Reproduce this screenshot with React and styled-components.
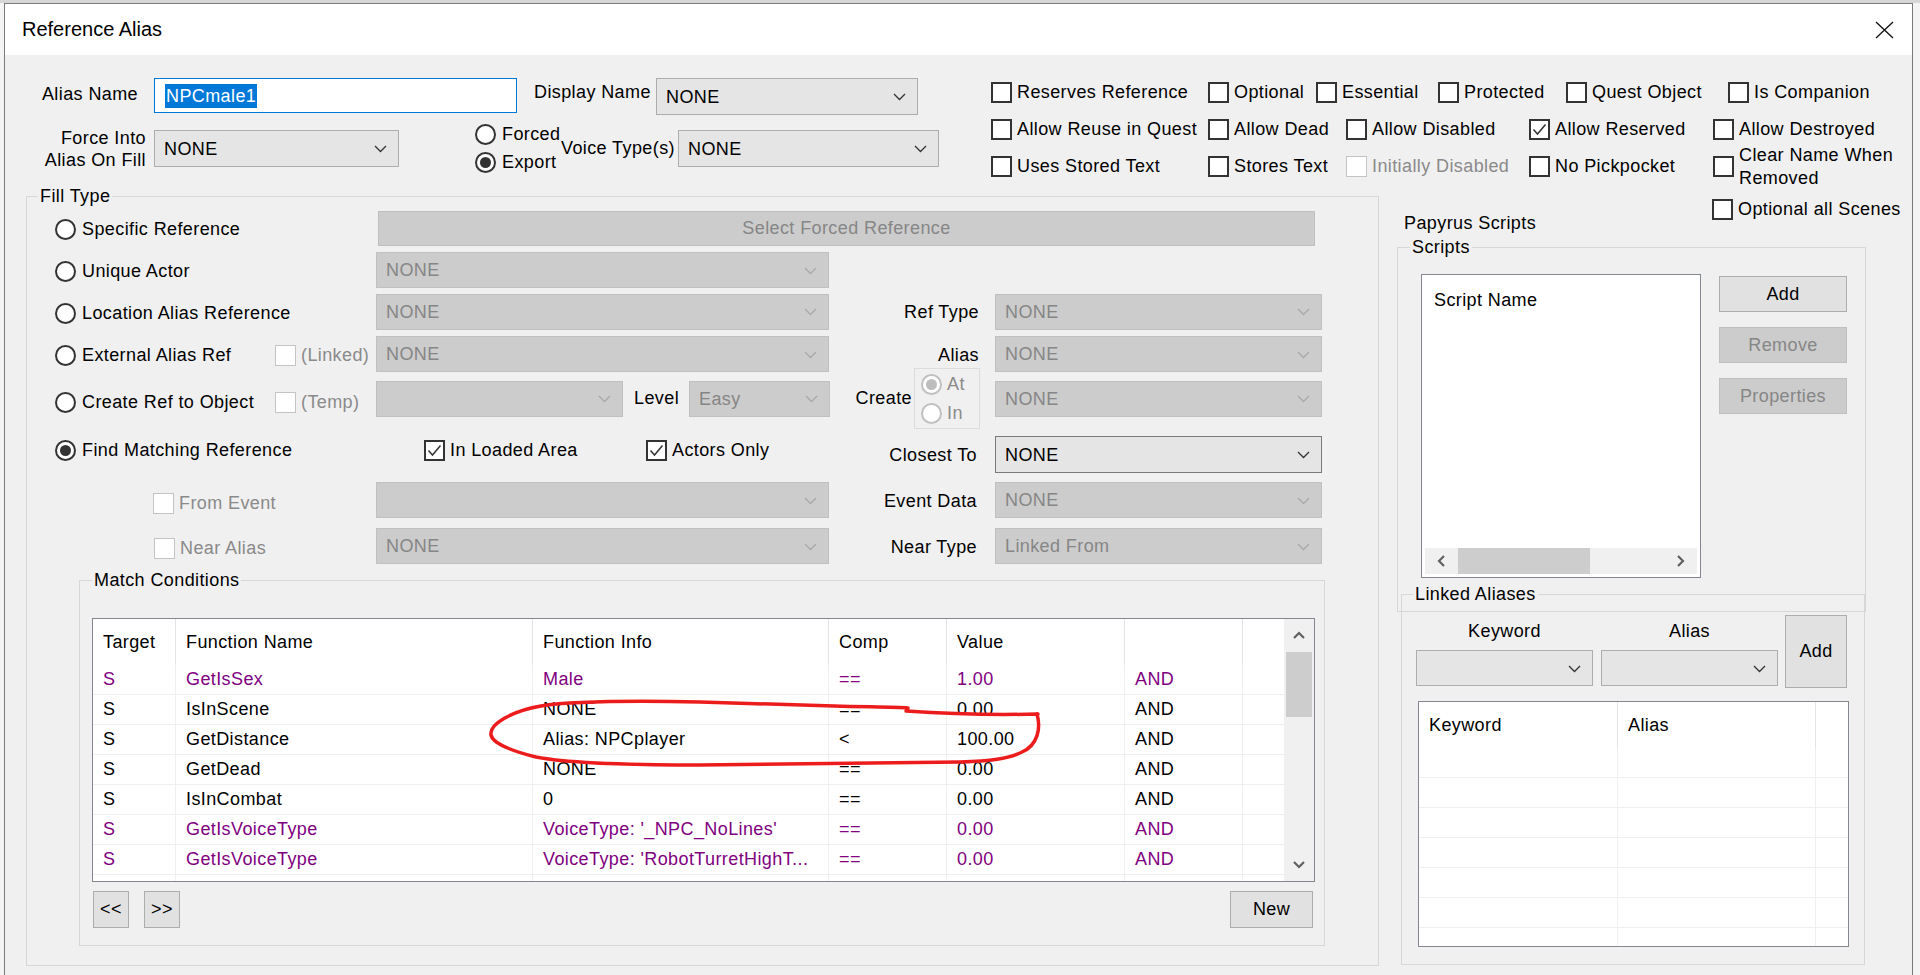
import React from 'react';
import styled, { createGlobalStyle } from 'styled-components';

const GlobalStyle = createGlobalStyle`
  html, body { margin: 0; padding: 0; height: 100%; overflow: hidden; }
  body {
    background: #f4f4f4;
    font-family: "Liberation Sans", Arial, sans-serif;
    font-size: 18px;
    letter-spacing: 0.4px;
    color: #000;
  }
  #root { height: 100%; }
  * { box-sizing: border-box; }
`;

const Page = styled.div`
  height: 975px;
  border-top: 3px solid #d6d6d6;
`;

const Dialog = styled.div`
  margin-left: 4px;
  width: 1909px;
  height: 972px;
  border: 1px solid #7a7a7a;
  border-bottom: none;
  background: #f0f0f0;
  display: flex;
  flex-direction: column;
`;

const TitleBar = styled.div`
  height: 51px;
  flex: none;
  background: #fff;
  display: flex;
  align-items: center;
  justify-content: space-between;
  padding: 0 18px 0 17px;
`;

const TitleText = styled.span`
  font-size: 20px;
  letter-spacing: 0;
  color: #000;
`;

const TopArea = styled.div`
  height: 131px;
  flex: none;
  display: flex;
  padding-top: 23px;
`;

const LeftForm = styled.div`
  width: 986px;
  flex: none;
  display: flex;
  flex-direction: column;
`;

const FormRow = styled.div`
  display: flex;
  align-items: center;
  height: 37px;
  margin-top: ${p => p.$mt || 0}px;
`;

const FieldLabel = styled.span`
  flex: none;
  width: ${p => p.$w}px;
  margin-left: ${p => p.$ml || 0}px;
  margin-bottom: ${p => p.$mb || 0}px;
  text-align: ${p => (p.$right ? 'right' : 'left')};
  line-height: ${p => p.$lh || 21}px;
  white-space: nowrap;
`;

const TextInput = styled.div`
  flex: none;
  align-self: flex-start;
  width: ${p => p.$w}px;
  height: 35px;
  margin-left: ${p => p.$ml || 0}px;
  background: #fff;
  border: 1px solid #0078d7;
  display: flex;
  align-items: center;
  padding-left: 10px;
`;

const Selected = styled.span`
  background: #0078d7;
  color: #fff;
  line-height: 24px;
  padding: 0 1px;
`;

const ComboBox = styled.div`
  flex: none;
  display: flex;
  align-items: center;
  justify-content: space-between;
  width: ${p => p.$w}px;
  height: ${p => p.$h || 36}px;
  margin-left: ${p => p.$ml || 0}px;
  margin-top: ${p => p.$mt || 0}px;
  padding: 1px 11px 0 9px;
  background: ${p => (p.$disabled ? '#cccccc' : '#e5e5e5')};
  border: 1px solid ${p => (p.$disabled ? '#c0c0c0' : p.$dark ? '#7a7a7a' : '#adadad')};
  color: ${p => (p.$disabled ? '#868686' : '#000')};
  white-space: nowrap;
`;

const PushButton = styled.button`
  flex: none;
  font: inherit;
  letter-spacing: inherit;
  padding: 0;
  width: ${p => p.$w}px;
  height: ${p => p.$h}px;
  margin-left: ${p => p.$ml || 0}px;
  display: flex;
  align-items: center;
  justify-content: center;
  background: ${p => (p.$disabled ? '#cccccc' : '#e1e1e1')};
  border: 1px solid ${p => (p.$disabled ? '#bfbfbf' : '#adadad')};
  color: ${p => (p.$disabled ? '#868686' : '#000')};
`;

const CheckItem = styled.label`
  display: flex;
  align-items: center;
  gap: 5px;
  flex: none;
  width: ${p => (p.$w ? `${p.$w}px` : 'auto')};
  margin-left: ${p => p.$ml || 0}px;
  margin-top: ${p => p.$mt || 0}px;
  color: ${p => (p.$disabled ? '#8a8a8a' : '#000')};
  line-height: ${p => p.$lh || 21}px;
  white-space: nowrap;
  align-self: ${p => p.$self || 'auto'};
`;

const Box = styled.span`
  width: 21px;
  height: 21px;
  flex: none;
  background: #fff;
  border: ${p => (p.$disabled ? '1.5px solid #c4c4c4' : '2px solid #333')};
  display: flex;
  align-items: center;
  justify-content: center;
`;

const RadioCircle = styled.span`
  width: 21px;
  height: 21px;
  flex: none;
  border-radius: 50%;
  background: #fff;
  border: 2px solid ${p => (p.$disabled ? '#c0c0c0' : '#333')};
  display: flex;
  align-items: center;
  justify-content: center;
  &::after {
    content: '';
    display: ${p => (p.$checked ? 'block' : 'none')};
    width: 11px;
    height: 11px;
    border-radius: 50%;
    background: ${p => (p.$disabled ? '#bdbdbd' : '#333')};
  }
`;

const RadioItem = styled.label`
  display: flex;
  align-items: center;
  gap: ${p => p.$gap || 6}px;
  height: ${p => p.$h || 28}px;
  white-space: nowrap;
  color: ${p => (p.$disabled ? '#8a8a8a' : '#000')};
`;

const RadioStack = styled.div`
  flex: none;
  width: ${p => p.$w}px;
  margin-left: ${p => p.$ml || 0}px;
  display: flex;
  flex-direction: column;
`;

const CheckBlock = styled.div`
  margin-top: -4px;
  display: flex;
  flex-direction: column;
`;

const CheckRow = styled.div`
  display: flex;
  align-items: center;
  height: 37px;
`;

const BottomArea = styled.div`
  display: flex;
  align-items: flex-start;
  flex: 1;
`;

const Group = styled.fieldset`
  margin: ${p => p.$mt || 0}px 0 0 ${p => p.$ml || 0}px;
  padding: 0 0 ${p => p.$pb || 0}px 0;
  width: ${p => p.$w}px;
  height: ${p => (p.$h ? `${p.$h}px` : 'auto')};
  min-width: 0;
  border: 1px solid #d7d7d7;
  flex: none;
`;

const Legend = styled.legend`
  margin-left: ${p => p.$ml}px;
  padding: 0 2px;
  line-height: 21px;
  font-size: 18px;
`;

const FillGrid = styled.div`
  margin: 1px 0 0 28px;
  display: grid;
  grid-template-columns: 220px 101px 453px 166px 327px;
  grid-template-rows: 41px 42px 41px 44px 45px 56px 46px 46px;
`;

const Cell = styled.div`
  grid-column: ${p => p.$col};
  grid-row: ${p => p.$row};
  display: flex;
  align-items: center;
  justify-content: ${p => (p.$end ? 'flex-end' : 'flex-start')};
  padding-right: ${p => p.$pr || 0}px;
  padding-top: ${p => p.$pt || 0}px;
  min-width: 0;
`;

const SideLabel = styled.span`
  line-height: 21px;
  white-space: nowrap;
  margin-top: ${p => p.$mt || 0}px;
`;

const AtInBox = styled.div`
  width: 66px;
  height: 61px;
  margin-left: 2px;
  flex: none;
  border: 1px solid #dcdcdc;
  padding: 1px 0 0 6px;
  display: flex;
  flex-direction: column;
`;

const TableBox = styled.div`
  position: relative;
  width: ${p => p.$w}px;
  height: ${p => p.$h}px;
  margin: ${p => p.$m};
  border: 1px solid #828790;
  background: #fff;
  display: flex;
  flex: none;
`;

const ListArea = styled.div`
  flex: 1;
  overflow: hidden;
  min-width: 0;
`;

const THead = styled.div`
  display: flex;
  height: 46px;
`;

const TRow = styled.div`
  display: flex;
  height: 30px;
  border-bottom: 1px solid #efefef;
  color: ${p => (p.$purple ? '#800080' : '#000')};
`;

const TCell = styled.div`
  flex: ${p => (p.$w ? `0 0 ${p.$w}px` : '1')};
  padding-left: 10px;
  display: flex;
  align-items: center;
  border-right: 1px solid ${p => (p.$head ? '#e5e5e5' : '#efefef')};
  white-space: nowrap;
  overflow: hidden;
  &:last-child { border-right: none; }
`;

const VScroll = styled.div`
  width: 30px;
  flex: none;
  background: #f0f0f0;
  display: flex;
  flex-direction: column;
  align-items: center;
`;

const ArrowCell = styled.div`
  height: 33px;
  width: 100%;
  flex: none;
  display: flex;
  align-items: center;
  justify-content: center;
`;

const VThumb = styled.div`
  width: 26px;
  height: 65px;
  flex: none;
  background: #cdcdcd;
`;

const Spacer = styled.div`
  flex: 1;
`;

const Overlay = styled.svg`
  position: absolute;
  left: 390px;
  top: 75px;
  width: 660px;
  height: 100px;
  overflow: visible;
  pointer-events: none;
`;

const ButtonRow = styled.div`
  display: flex;
  align-items: center;
  height: 37px;
  margin: 9px 11px 0 13px;
`;

const PushRight = styled.div`
  margin-left: auto;
`;

const RightCol = styled.div`
  width: 514px;
  margin-left: 18px;
  flex: none;
  display: flex;
  flex-direction: column;
`;

const RightTop = styled.div`
  display: flex;
  height: 36px;
  margin-top: 12px;
`;

const PapyrusLabel = styled.span`
  align-self: flex-end;
  margin-left: 7px;
  width: 308px;
  flex: none;
  line-height: 21px;
`;

const ScriptsBody = styled.div`
  display: flex;
  align-items: flex-start;
  margin: 16px 0 33px 23px;
`;

const ScriptList = styled.div`
  width: 280px;
  height: 304px;
  flex: none;
  background: #fff;
  border: 1px solid #828790;
  padding: 3px;
  display: flex;
  flex-direction: column;
`;

const ListHeader = styled.div`
  height: 44px;
  padding-left: 9px;
  display: flex;
  align-items: center;
`;

const HScroll = styled.div`
  height: 26px;
  flex: none;
  background: #f0f0f0;
  display: flex;
  align-items: center;
`;

const HArrow = styled.div`
  width: ${p => p.$w}px;
  height: 100%;
  flex: none;
  display: flex;
  align-items: center;
  justify-content: center;
`;

const HThumb = styled.div`
  width: 132px;
  height: 100%;
  flex: none;
  background: #cdcdcd;
`;

const ButtonCol = styled.div`
  display: flex;
  flex-direction: column;
  gap: 15px;
  margin: 2px 0 0 18px;
`;

const LinkedTop = styled.div`
  display: flex;
  align-items: flex-end;
  margin: 10px 0 0 14px;
`;

const ComboCol = styled.div`
  width: 177px;
  flex: none;
  margin-left: ${p => p.$ml || 0}px;
  margin-bottom: 2px;
  display: flex;
  flex-direction: column;
  align-items: center;
`;

const ColLabel = styled.span`
  line-height: 21px;
  margin-bottom: 8px;
`;

const Chevron = ({ color = '#333', dir = 'down' }) => {
  const pts = {
    down: '1,1 6.5,6.5 12,1',
    up: '1,6.5 6.5,1 12,6.5',
  }[dir];
  return (
    <svg width="13" height="8" viewBox="0 0 13 8" style={{ flex: 'none' }}>
      <polyline points={pts} fill="none" stroke={color} strokeWidth="1.3" />
    </svg>
  );
};

const ScrollArrow = ({ dir }) => {
  const pts = {
    up: '1,7 6,2 11,7',
    down: '1,2 6,7 11,2',
    left: '7,1 2,6 7,11',
    right: '2,1 7,6 2,11',
  }[dir];
  const horiz = dir === 'left' || dir === 'right';
  return (
    <svg width={horiz ? 9 : 12} height={horiz ? 12 : 9} viewBox={horiz ? '0 0 9 12' : '0 0 12 9'}>
      <polyline points={pts} fill="none" stroke="#606060" strokeWidth="2.2" />
    </svg>
  );
};

const Combo = ({ children, disabled, dark, w, h, ml, mt }) => (
  <ComboBox $disabled={disabled} $dark={dark} $w={w} $h={h} $ml={ml} $mt={mt}>
    <span>{children}</span>
    <Chevron color={disabled ? '#a9a9a9' : '#333'} />
  </ComboBox>
);

const Check = ({ children, checked, disabled, w, ml, mt, lh, self }) => (
  <CheckItem $w={w} $ml={ml} $mt={mt} $disabled={disabled} $lh={lh} $self={self}>
    <Box $disabled={disabled}>
      {checked && (
        <svg width="15" height="13" viewBox="0 0 15 13">
          <polyline points="1.5,6.5 5.5,11 13.5,1.5" fill="none" stroke="#333" strokeWidth="1.5" />
        </svg>
      )}
    </Box>
    <span>{children}</span>
  </CheckItem>
);

const Radio = ({ children, checked, disabled, h, gap }) => (
  <RadioItem $disabled={disabled} $h={h} $gap={gap}>
    <RadioCircle $checked={checked} $disabled={disabled} />
    <span>{children}</span>
  </RadioItem>
);

const DataTable = ({ cols, header, rows, w, h, m, scroll, children }) => (
  <TableBox $w={w} $h={h} $m={m}>
    <ListArea>
      <THead>
        {cols.map((cw, i) => (
          <TCell key={i} $w={cw} $head>
            {header[i] || ''}
          </TCell>
        ))}
      </THead>
      {rows.map((r, ri) => (
        <TRow key={ri} $purple={r.purple}>
          {cols.map((cw, i) => (
            <TCell key={i} $w={cw}>
              {(r.cells && r.cells[i]) || ''}
            </TCell>
          ))}
        </TRow>
      ))}
    </ListArea>
    {scroll && (
      <VScroll>
        <ArrowCell>
          <ScrollArrow dir="up" />
        </ArrowCell>
        <VThumb />
        <Spacer />
        <ArrowCell>
          <ScrollArrow dir="down" />
        </ArrowCell>
      </VScroll>
    )}
    {children}
  </TableBox>
);

const checkRows = [
  [
    { t: 'Reserves Reference', w: 217 },
    { t: 'Optional', w: 108 },
    { t: 'Essential', w: 122 },
    { t: 'Protected', w: 128 },
    { t: 'Quest Object', w: 162 },
    { t: 'Is Companion' },
  ],
  [
    { t: 'Allow Reuse in Quest', w: 217 },
    { t: 'Allow Dead', w: 138 },
    { t: 'Allow Disabled', w: 183 },
    { t: 'Allow Reserved', w: 184, checked: true },
    { t: 'Allow Destroyed' },
  ],
  [
    { t: 'Uses Stored Text', w: 217 },
    { t: 'Stores Text', w: 138 },
    { t: 'Initially Disabled', w: 183, disabled: true },
    { t: 'No Pickpocket', w: 184 },
    { t: ['Clear Name When', <br key="b" />, 'Removed'], lh: 23 },
  ],
];

const matchCols = [83, 357, 296, 118, 178, 118, 0];
const matchHeader = ['Target', 'Function Name', 'Function Info', 'Comp', 'Value', '', ''];
const matchRows = [
  { purple: true, cells: ['S', 'GetIsSex', 'Male', '==', '1.00', 'AND'] },
  { cells: ['S', 'IsInScene', 'NONE', '==', '0.00', 'AND'] },
  { cells: ['S', 'GetDistance', 'Alias: NPCplayer', '<', '100.00', 'AND'] },
  { cells: ['S', 'GetDead', 'NONE', '==', '0.00', 'AND'] },
  { cells: ['S', 'IsInCombat', '0', '==', '0.00', 'AND'] },
  { purple: true, cells: ['S', 'GetIsVoiceType', "VoiceType: '_NPC_NoLines'", '==', '0.00', 'AND'] },
  { purple: true, cells: ['S', 'GetIsVoiceType', "VoiceType: 'RobotTurretHighT...", '==', '0.00', 'AND'] },
  { cells: [] },
];

const linkedRows = Array.from({ length: 7 }, () => ({ cells: [] }));

export default function App() {
  return (
    <>
      <GlobalStyle />
      <Page>
        <Dialog>
          <TitleBar>
            <TitleText>Reference Alias</TitleText>
            <svg width="19" height="18" viewBox="0 0 19 18">
              <path d="M1 1 L18 17 M18 1 L1 17" stroke="#111" strokeWidth="1.3" fill="none" />
            </svg>
          </TitleBar>

          <TopArea>
            <LeftForm>
              <FormRow>
                <FieldLabel $w={133} $right $mb={5}>Alias Name</FieldLabel>
                <TextInput $w={363} $ml={16}>
                  <Selected>NPCmale1</Selected>
                </TextInput>
                <FieldLabel $w={122} $ml={17} $mb={9}>Display Name</FieldLabel>
                <Combo w={262} h={37}>NONE</Combo>
              </FormRow>
              <FormRow $mt={15}>
                <FieldLabel $w={141} $right $lh={22}>
                  Force Into
                  <br />
                  Alias On Fill
                </FieldLabel>
                <Combo w={245} h={37} ml={8}>NONE</Combo>
                <RadioStack $w={86} $ml={76}>
                  <Radio>Forced</Radio>
                  <Radio checked>Export</Radio>
                </RadioStack>
                <FieldLabel $w={117}>Voice Type(s)</FieldLabel>
                <Combo w={261} h={37}>NONE</Combo>
              </FormRow>
            </LeftForm>

            <CheckBlock>
              {checkRows.map((row, ri) => (
                <CheckRow key={ri}>
                  {row.map((c, ci) => (
                    <Check key={ci} w={c.w} checked={c.checked} disabled={c.disabled} lh={c.lh}>
                      {c.t}
                    </Check>
                  ))}
                </CheckRow>
              ))}
            </CheckBlock>
          </TopArea>

          <BottomArea>
            <Group $ml={21} $w={1353} $h={780}>
              <Legend $ml={11}>Fill Type</Legend>
              <FillGrid>
                <Cell $col="1" $row="1" $pt={2}>
                  <Radio>Specific Reference</Radio>
                </Cell>
                <Cell $col="3 / 6" $row="1">
                  <PushButton $w={937} $h={35} $ml={2} $disabled>
                    Select Forced Reference
                  </PushButton>
                </Cell>

                <Cell $col="1" $row="2" $pt={2}>
                  <Radio>Unique Actor</Radio>
                </Cell>
                <Cell $col="3" $row="2">
                  <Combo w={453} disabled>NONE</Combo>
                </Cell>

                <Cell $col="1" $row="3" $pt={3}>
                  <Radio>Location Alias Reference</Radio>
                </Cell>
                <Cell $col="3" $row="3">
                  <Combo w={453} disabled>NONE</Combo>
                </Cell>
                <Cell $col="4" $row="3" $end $pr={16} $pt={2}>
                  <SideLabel>Ref Type</SideLabel>
                </Cell>
                <Cell $col="5" $row="3">
                  <Combo w={327} disabled>NONE</Combo>
                </Cell>

                <Cell $col="1" $row="4" $pt={3}>
                  <Radio>External Alias Ref</Radio>
                </Cell>
                <Cell $col="2" $row="4" $pt={3}>
                  <Check disabled>(Linked)</Check>
                </Cell>
                <Cell $col="3" $row="4">
                  <Combo w={453} disabled>NONE</Combo>
                </Cell>
                <Cell $col="4" $row="4" $end $pr={16} $pt={2}>
                  <SideLabel>Alias</SideLabel>
                </Cell>
                <Cell $col="5" $row="4">
                  <Combo w={327} disabled>NONE</Combo>
                </Cell>

                <Cell $col="1" $row="5" $pt={7}>
                  <Radio>Create Ref to Object</Radio>
                </Cell>
                <Cell $col="2" $row="5" $pt={7}>
                  <Check disabled>(Temp)</Check>
                </Cell>
                <Cell $col="3" $row="5">
                  <Combo w={247} disabled />
                  <FieldLabel $w={55} $ml={11}>Level</FieldLabel>
                  <Combo w={141} disabled>Easy</Combo>
                </Cell>
                <Cell $col="4" $row="5" $end $pr={15}>
                  <SideLabel>Create</SideLabel>
                  <AtInBox>
                    <Radio checked disabled h={31} gap={5}>At</Radio>
                    <Radio disabled h={31} gap={5}>In</Radio>
                  </AtInBox>
                </Cell>
                <Cell $col="5" $row="5">
                  <Combo w={327} disabled>NONE</Combo>
                </Cell>

                <Cell $col="1" $row="6" $pt={3}>
                  <Radio checked>Find Matching Reference</Radio>
                </Cell>
                <Cell $col="2 / 4" $row="6" $pt={3}>
                  <Check checked ml={149} w={222}>In Loaded Area</Check>
                  <Check checked>Actors Only</Check>
                </Cell>
                <Cell $col="4" $row="6" $end $pr={18}>
                  <SideLabel $mt={12}>Closest To</SideLabel>
                </Cell>
                <Cell $col="5" $row="6">
                  <Combo w={327} h={37} dark mt={11}>NONE</Combo>
                </Cell>

                <Cell $col="1" $row="7" $pt={6}>
                  <Check disabled ml={98}>From Event</Check>
                </Cell>
                <Cell $col="3" $row="7">
                  <Combo w={453} disabled />
                </Cell>
                <Cell $col="4" $row="7" $end $pr={18} $pt={2}>
                  <SideLabel>Event Data</SideLabel>
                </Cell>
                <Cell $col="5" $row="7">
                  <Combo w={327} disabled>NONE</Combo>
                </Cell>

                <Cell $col="1" $row="8" $pt={5}>
                  <Check disabled ml={99}>Near Alias</Check>
                </Cell>
                <Cell $col="3" $row="8">
                  <Combo w={453} disabled>NONE</Combo>
                </Cell>
                <Cell $col="4" $row="8" $end $pr={18} $pt={2}>
                  <SideLabel>Near Type</SideLabel>
                </Cell>
                <Cell $col="5" $row="8">
                  <Combo w={327} disabled>Linked From</Combo>
                </Cell>
              </FillGrid>

              <Group $ml={52} $mt={1} $w={1246} $pb={17}>
                <Legend $ml={12}>Match Conditions</Legend>
                <DataTable
                  cols={matchCols}
                  header={matchHeader}
                  rows={matchRows}
                  w={1223}
                  h={264}
                  m="27px 0 0 12px"
                  scroll
                >
                  <Overlay viewBox="483 694 660 100">
                    <path
                      d="M 1037 714 C 1041 728, 1038 745, 1022 752 C 1008 759, 990 761, 960 762 L 700 765 C 620 765, 560 762, 536 757 C 512 751, 493 744, 491 735 C 489 724, 512 711, 541 706 C 580 700, 650 701, 700 702 L 834 706 C 870 707, 895 707, 908 708 M 906 711 C 950 714, 1000 715, 1038 714"
                      fill="none"
                      stroke="#ec1c1c"
                      strokeWidth="3.5"
                      strokeLinecap="round"
                    />
                  </Overlay>
                </DataTable>
                <ButtonRow>
                  <PushButton $w={36} $h={37}>&lt;&lt;</PushButton>
                  <PushButton $w={36} $h={37} $ml={15}>&gt;&gt;</PushButton>
                  <PushRight>
                    <PushButton $w={83} $h={37}>New</PushButton>
                  </PushRight>
                </ButtonRow>
              </Group>
            </Group>

            <RightCol>
              <RightTop>
                <PapyrusLabel>Papyrus Scripts</PapyrusLabel>
                <Check self="flex-start" mt={1}>Optional all Scenes</Check>
              </RightTop>

              <Group $w={469} $mt={3}>
                <Legend $ml={12}>Scripts</Legend>
                <ScriptsBody>
                  <ScriptList>
                    <ListHeader>Script Name</ListHeader>
                    <Spacer />
                    <HScroll>
                      <HArrow $w={33}>
                        <ScrollArrow dir="left" />
                      </HArrow>
                      <HThumb />
                      <Spacer />
                      <HArrow $w={34}>
                        <ScrollArrow dir="right" />
                      </HArrow>
                    </HScroll>
                  </ScriptList>
                  <ButtonCol>
                    <PushButton $w={128} $h={36}>Add</PushButton>
                    <PushButton $w={128} $h={36} $disabled>Remove</PushButton>
                    <PushButton $w={128} $h={36} $disabled>Properties</PushButton>
                  </ButtonCol>
                </ScriptsBody>
              </Group>

              <Group $w={464} $ml={4} $mt={-28}>
                <Legend $ml={11}>Linked Aliases</Legend>
                <LinkedTop>
                  <ComboCol>
                    <ColLabel>Keyword</ColLabel>
                    <Combo w={177} />
                  </ComboCol>
                  <ComboCol $ml={8}>
                    <ColLabel>Alias</ColLabel>
                    <Combo w={177} />
                  </ComboCol>
                  <PushButton $w={62} $h={73} $ml={7}>Add</PushButton>
                </LinkedTop>
                <DataTable
                  cols={[199, 198, 0]}
                  header={['Keyword', 'Alias', '']}
                  rows={linkedRows}
                  w={431}
                  h={246}
                  m="13px 0 17px 16px"
                />
              </Group>
            </RightCol>
          </BottomArea>
        </Dialog>
      </Page>
    </>
  );
}
